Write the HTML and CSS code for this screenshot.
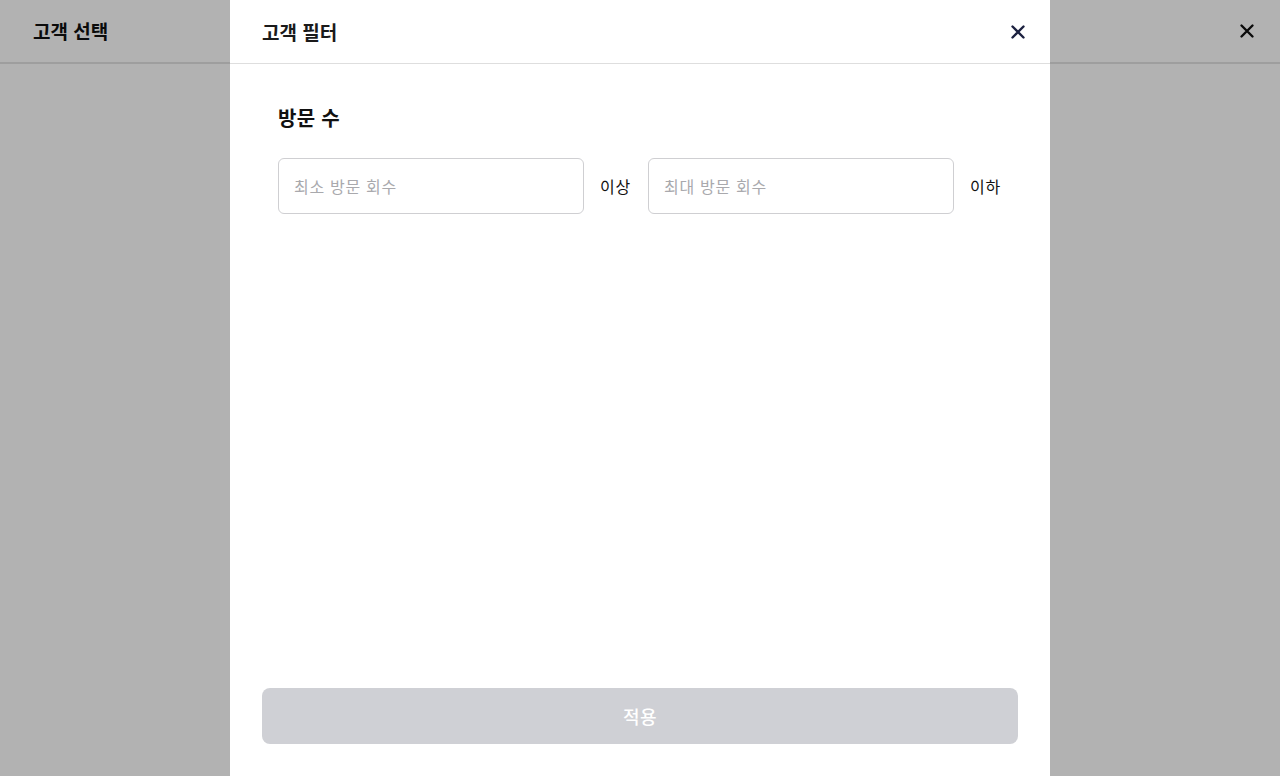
FILE: index.html
```html
<!DOCTYPE html>
<html lang="ko">
<head>
<meta charset="utf-8">
<title>고객 필터</title>
<link rel="stylesheet" href="styles.css">
</head>
<body>
<div class="page">
  <header class="page-header">
    <h1 class="page-title">고객 선택</h1>
    <button class="icon-btn page-close" aria-label="닫기">
      <svg width="24" height="24" viewBox="0 0 24 24"><path d="M6.5 6.5L17.5 17.5M17.5 6.5L6.5 17.5" stroke="#111" stroke-width="2.4" stroke-linecap="round"/></svg>
    </button>
  </header>
</div>
<div class="overlay">
  <div class="modal">
    <header class="modal-header">
      <h2 class="modal-title">고객 필터</h2>
      <button class="icon-btn" aria-label="닫기">
        <svg width="24" height="24" viewBox="0 0 24 24"><path d="M6.5 6.5L17.5 17.5M17.5 6.5L6.5 17.5" stroke="#1c2140" stroke-width="2.4" stroke-linecap="round"/></svg>
      </button>
    </header>
    <div class="modal-body">
      <h3 class="section-title">방문 수</h3>
      <div class="range-row">
        <input class="field" type="text" placeholder="최소 방문 회수">
        <span class="unit">이상</span>
        <input class="field" type="text" placeholder="최대 방문 회수">
        <span class="unit">이하</span>
      </div>
    </div>
    <footer class="modal-footer">
      <button class="apply-btn" disabled>적용</button>
    </footer>
  </div>
</div>
</body>
</html>
```
FILE: styles.css
```css
* { box-sizing: border-box; }
html, body { margin: 0; padding: 0; height: 100%; }
body {
  font-family: "Noto Sans CJK KR", "Noto Sans", sans-serif;
  color: #111;
  background: #fff;
  overflow: hidden;
}
.page { height: 100vh; }
.page-header {
  height: 64px;
  display: flex;
  align-items: center;
  justify-content: space-between;
  padding: 0 21px 0 33px;
  border-bottom: 2px solid #e2e2e2;
}
.page-title, .modal-title {
  margin: 0;
  font-size: 19px;
  font-weight: 700;
  letter-spacing: 0;
  line-height: 26px;
}
.icon-btn {
  border: 0;
  background: none;
  padding: 0;
  width: 24px;
  height: 24px;
  display: flex;
  align-items: center;
  justify-content: center;
  cursor: pointer;
}
.overlay {
  position: fixed;
  inset: 0;
  background: rgba(0, 0, 0, 0.3);
  display: flex;
  justify-content: center;
}
.modal {
  width: 820px;
  height: 100%;
  background: #fff;
  display: flex;
  flex-direction: column;
}
.modal-header {
  height: 64px;
  flex: none;
  display: flex;
  align-items: center;
  justify-content: space-between;
  padding: 0 20px 0 32px;
  border-bottom: 1px solid #dedede;
}
.modal-title { color: #1a1a1a; }
.modal-body {
  flex: 1;
  padding: 40px 48px 0;
}
.section-title {
  margin: 0 0 26px;
  font-size: 20px;
  font-weight: 700;
  line-height: 28px;
  color: #111;
  letter-spacing: 0.3px;
}
.range-row {
  display: flex;
  align-items: center;
  gap: 16px;
}
.field {
  width: 306px;
  height: 56px;
  border: 1px solid #cfcfd2;
  border-radius: 6px;
  padding: 0 15px;
  font-family: inherit;
  font-size: 16px;
  letter-spacing: 0.7px;
  color: #111;
  outline: none;
}
.field::placeholder { color: #a9a9ad; }
.unit {
  min-width: 32px;
  font-size: 16px;
  letter-spacing: 0.8px;
  color: #111;
}
.modal-footer {
  flex: none;
  padding: 0 32px 32px;
}
.apply-btn {
  width: 100%;
  height: 56px;
  border: 0;
  border-radius: 8px;
  background: #cfd0d5;
  color: #fff;
  font-family: inherit;
  font-size: 18px;
  font-weight: 500;
  letter-spacing: 0.5px;
}
```
